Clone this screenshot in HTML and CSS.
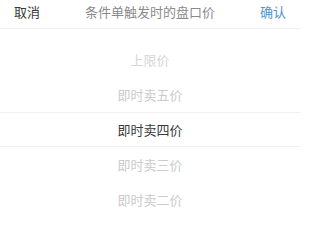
FILE: index.html
```html
<!DOCTYPE html>
<html lang="zh-CN">
<head>
<meta charset="utf-8">
<link rel="stylesheet" href="styles.css">
</head>
<body>
<div class="sheet">
  <div class="header">
    <span class="btn cancel">取消</span>
    <span class="title">条件单触发时的盘口价</span>
    <span class="btn confirm">确认</span>
  </div>
  <div class="picker">
    <div class="row far">上限价</div>
    <div class="row near">即时卖五价</div>
    <div class="row selected">即时卖四价</div>
    <div class="row near">即时卖三价</div>
    <div class="row near">即时卖二价</div>
  </div>
</div>
</body>
</html>
```
FILE: styles.css
```css
html, body {
  margin: 0;
  padding: 0;
  background: #fff;
}
.sheet {
  width: 300px;
  height: 220px;
  overflow: hidden;
  font-family: "Noto Sans CJK SC", "Noto Sans", sans-serif;
  font-size: 13px;
}
.header {
  height: 29px;
  box-sizing: border-box;
  display: flex;
  align-items: center;
  justify-content: space-between;
  padding: 0 14px 6px;
  border-bottom: 1px solid #f0f0f0;
}
.btn {
  line-height: 1;
}
.cancel {
  color: #383838;
}
.confirm {
  color: #4f95cc;
}
.title {
  color: #8a8a8a;
  line-height: 1;
}
.picker {
  padding-top: 13px;
  display: flex;
  flex-direction: column;
}
.row {
  height: 35px;
  display: flex;
  align-items: center;
  justify-content: center;
  box-sizing: border-box;
}
.far {
  color: #d6d6d6;
}
.near {
  color: #cbcbcb;
}
.selected {
  color: #383838;
  border-top: 1px solid #f0f0f0;
  border-bottom: 1px solid #f0f0f0;
}
```
